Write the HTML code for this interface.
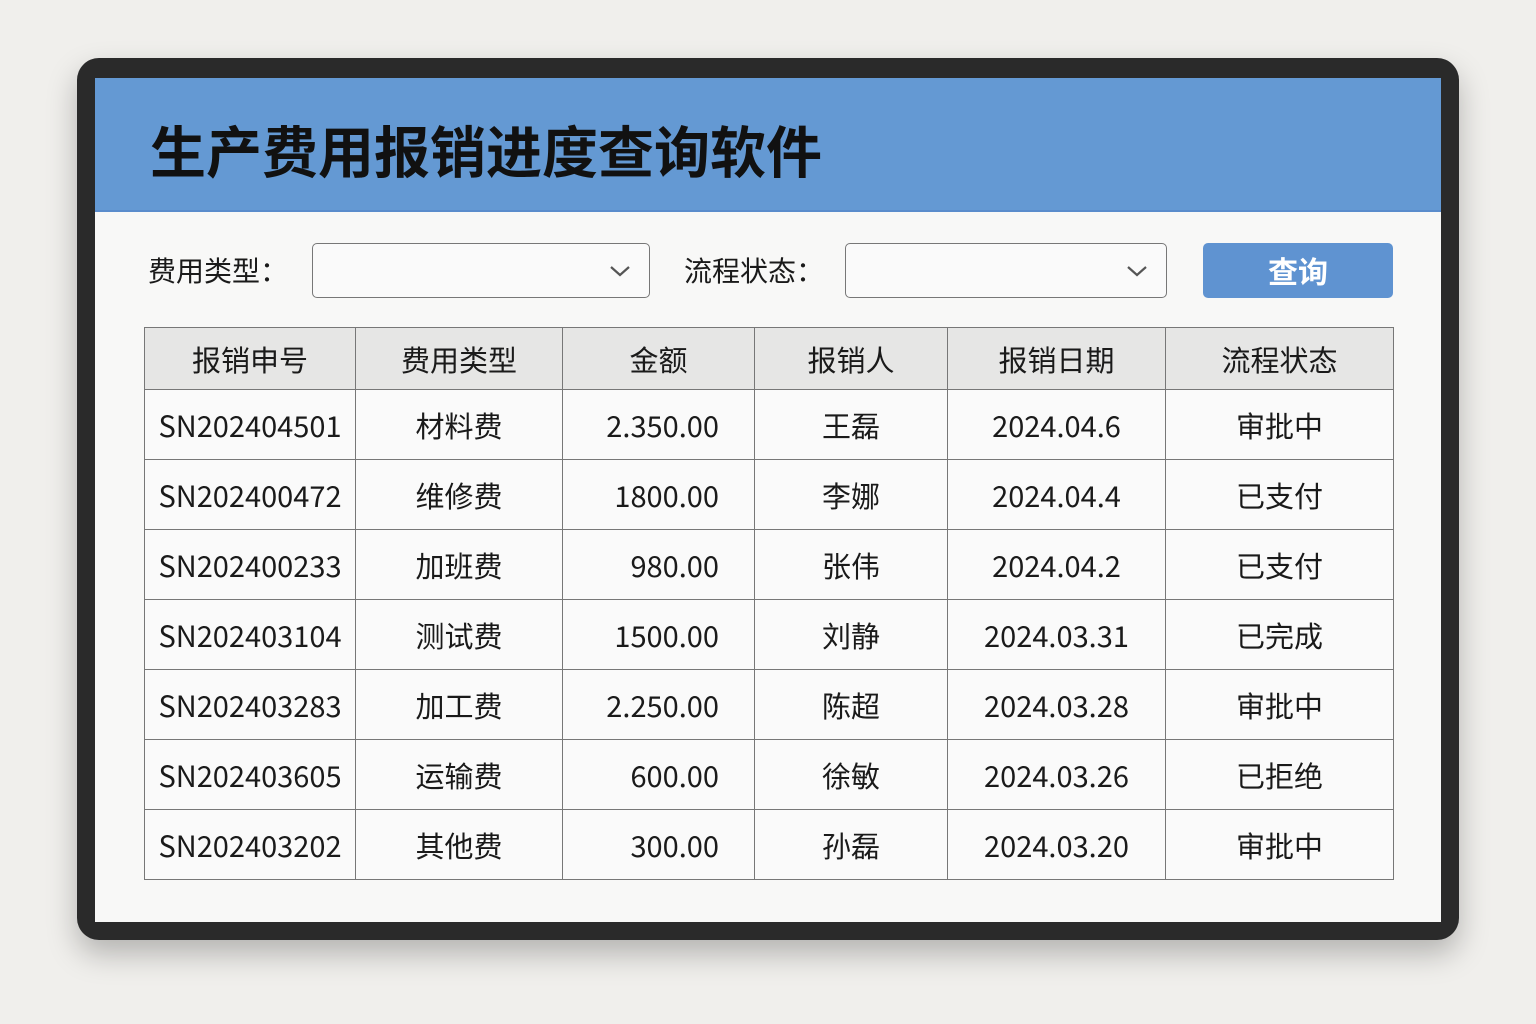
<!DOCTYPE html>
<html><head><meta charset="utf-8"><style>
*{margin:0;padding:0;box-sizing:border-box}
body{width:1536px;height:1024px;background:#f0efec;position:relative;overflow:hidden;font-family:"Noto Sans CJK SC",sans-serif;color:#1a1a1a}
.frame{position:absolute;left:77px;top:58px;width:1382px;height:882px;background:#2a2a2a;border-radius:22px;box-shadow:0 14px 30px rgba(0,0,0,.25)}
.win{position:absolute;left:95px;top:78px;width:1346px;height:844px;background:#f8f8f7}
.hdr{position:absolute;left:95px;top:78px;width:1346px;height:134px;background:#6499d3;border-bottom:2px solid #5a8ccc}
.title{position:absolute;left:150px;top:112px;font-size:56px;font-weight:bold;color:#111;letter-spacing:0;line-height:76px;font-family:"Noto Sans CJK SC",sans-serif}
.lbl{position:absolute;top:250px;font-size:28px;line-height:40px;font-family:"Noto Sans CJK SC",sans-serif;color:#1a1a1a}
.sel{position:absolute;top:243px;height:55px;border:1.5px solid #777;border-radius:5px;background:#fafafa}
.sel svg{position:absolute;right:18px;top:19px}
.btn{position:absolute;left:1203px;top:243px;width:190px;height:55px;background:#5f93d1;border-radius:5px;color:#fff;font-size:30px;font-weight:bold;text-align:center;line-height:55px;font-family:"Noto Sans CJK SC",sans-serif}
table{position:absolute;left:144px;top:327px;border-collapse:collapse;font-size:29px;font-family:"Noto Sans CJK SC",sans-serif}
td,th{border:1.5px solid #777;text-align:center;padding:0;background:#fafafa;font-weight:normal;line-height:40px}
th{height:62px;background:#e6e6e5;font-size:29px}
td{height:70px}
td.a{text-align:right;padding-right:35px}
</style></head><body>
<div class="frame"></div>
<div class="win"></div>
<div class="hdr"></div>
<div class="title">生产费用报销进度查询软件</div>
<div class="lbl" style="left:148px">费用类型：</div>
<div class="sel" style="left:312px;width:338px"><svg width="22" height="16"><path d="M2 4 L11 12 L20 4" stroke="#555" stroke-width="2.2" fill="none"/></svg></div>
<div class="lbl" style="left:684px">流程状态：</div>
<div class="sel" style="left:845px;width:322px"><svg width="22" height="16"><path d="M2 4 L11 12 L20 4" stroke="#555" stroke-width="2.2" fill="none"/></svg></div>
<div class="btn">查询</div>
<table>
<tr><th style="width:211px">报销申号</th><th style="width:207px">费用类型</th><th style="width:192px">金额</th><th style="width:193px">报销人</th><th style="width:218px">报销日期</th><th style="width:228px">流程状态</th></tr>
<tr><td>SN202404501</td><td>材料费</td><td class="a">2.350.00</td><td>王磊</td><td>2024.04.6</td><td>审批中</td></tr>
<tr><td>SN202400472</td><td>维修费</td><td class="a">1800.00</td><td>李娜</td><td>2024.04.4</td><td>已支付</td></tr>
<tr><td>SN202400233</td><td>加班费</td><td class="a">980.00</td><td>张伟</td><td>2024.04.2</td><td>已支付</td></tr>
<tr><td>SN202403104</td><td>测试费</td><td class="a">1500.00</td><td>刘静</td><td>2024.03.31</td><td>已完成</td></tr>
<tr><td>SN202403283</td><td>加工费</td><td class="a">2.250.00</td><td>陈超</td><td>2024.03.28</td><td>审批中</td></tr>
<tr><td>SN202403605</td><td>运输费</td><td class="a">600.00</td><td>徐敏</td><td>2024.03.26</td><td>已拒绝</td></tr>
<tr><td>SN202403202</td><td>其他费</td><td class="a">300.00</td><td>孙磊</td><td>2024.03.20</td><td>审批中</td></tr>
</table>
</body></html>
